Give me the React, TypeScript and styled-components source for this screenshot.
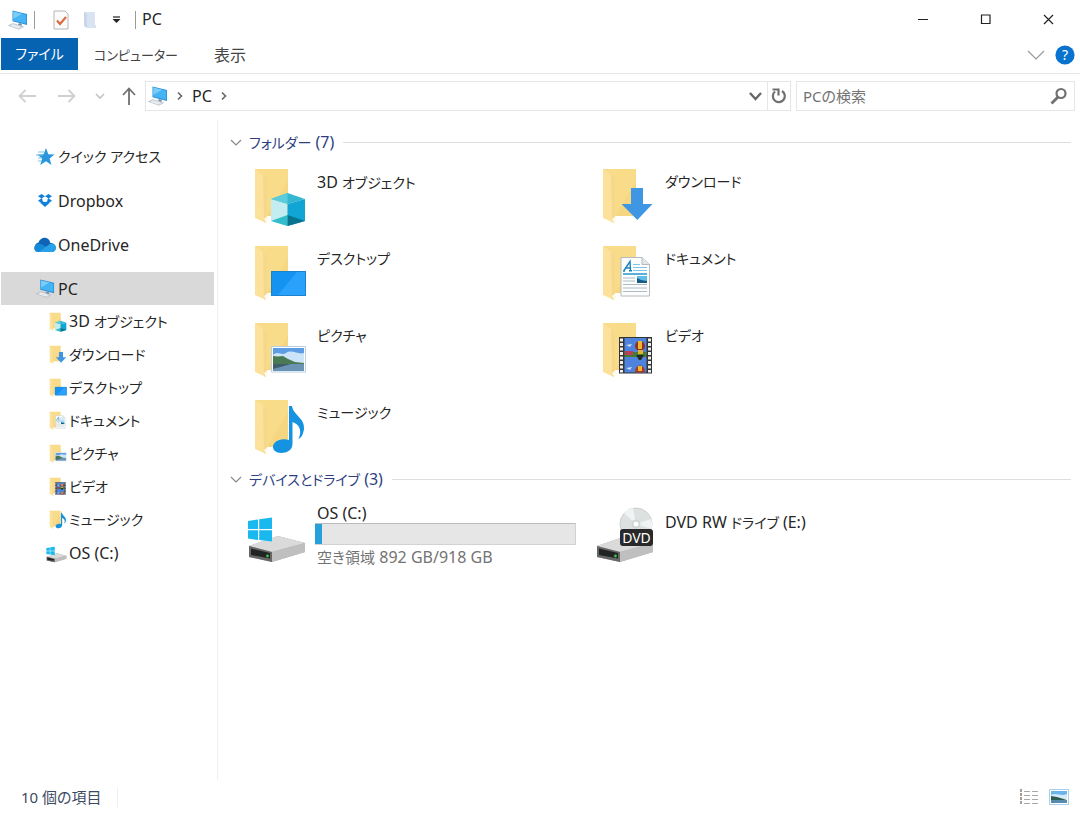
import React from "react";
import styled, { createGlobalStyle, css } from "styled-components";

const GlobalStyle = createGlobalStyle`
  * { box-sizing: border-box; }
  html, body { margin: 0; background: #ffffff; }
  body, button, input {
    font-family: "Noto Sans", "Noto Sans CJK JP", sans-serif;
    font-size: 16px;
    line-height: 24px;
    color: #262626;
    font-feature-settings: "palt";
  }
  button { border: 0; padding: 0; background: none; cursor: pointer; }
  a { color: inherit; text-decoration: none; }
  ul { list-style: none; margin: 0; padding: 0; }
  svg { display: block; flex: none; }
`;

const Window = styled.div`
  display: flex;
  flex-direction: column;
  min-height: 100vh;
`;

const TitleBar = styled.header`
  display: flex;
  align-items: center;
  height: 38px;
  padding-left: 8px;
`;

const QuickTools = styled.div`
  display: flex;
  align-items: center;
  padding-top: 2px;
`;

const ToolButton = styled.button<{ $width: number }>`
  display: flex;
  align-items: center;
  justify-content: center;
  width: ${(p) => p.$width}px;
  height: 24px;
`;

const Separator = styled.span`
  width: 1px;
  height: 18px;
  background: #9b9b9b;
`;

const Title = styled.h1`
  margin: 0 0 0 6px;
  font-size: 16px;
  font-weight: 400;
`;

const WindowControls = styled.div`
  display: flex;
  margin-left: auto;
`;

const WindowButton = styled(ToolButton)`
  height: 38px;
`;

const Ribbon = styled.nav`
  display: flex;
  align-items: center;
  height: 36px;
  padding: 0 5px 3px 1px;
  border-bottom: 1px solid #e6e6e6;
`;

const Tab = styled.button<{ $active?: boolean; $width: number; $size: number }>`
  width: ${(p) => p.$width}px;
  height: 32px;
  padding-top: 2px;
  font-size: ${(p) => p.$size}px;
  color: #444444;
  ${(p) =>
    p.$active &&
    css`
      padding-top: 0;
      color: #ffffff;
      background: #0563b1;
    `}
`;

const RibbonEnd = styled.div`
  display: flex;
  align-items: center;
  gap: 10px;
  margin-left: auto;
  padding-top: 2px;
`;

const NavBar = styled.div`
  display: flex;
  align-items: center;
  padding: 7px 5px 9px 8px;
`;

const Address = styled.div`
  display: flex;
  align-items: center;
  flex: 1;
  gap: 9px;
  height: 30px;
  padding-left: 2px;
  border: 1px solid #e6e6e6;
`;

const AddressEnd = styled.div`
  display: flex;
  align-self: stretch;
  margin-left: auto;
`;

const AddressButton = styled(ToolButton)`
  height: 28px;
  & + & { border-left: 1px solid #e6e6e6; }
`;

const Search = styled.label`
  display: flex;
  align-items: center;
  width: 279px;
  height: 30px;
  margin-left: 5px;
  padding: 0 6px;
  border: 1px solid #e6e6e6;
`;

const SearchInput = styled.input`
  flex: 1;
  min-width: 0;
  padding: 0;
  border: 0;
  outline: 0;
  font-size: 15px;
  &::placeholder { color: #737373; opacity: 1; }
`;

const Body = styled.div`
  display: flex;
  flex: 1;
`;

const Sidebar = styled.nav`
  width: 218px;
  padding: 20px 3px 0 1px;
  border-right: 1px solid #f0f0f0;
`;

const RootItem = styled.li`
  margin-bottom: 11px;
`;

const TreeLink = styled.a<{ $child?: boolean; $selected?: boolean; $latin?: boolean }>`
  display: flex;
  align-items: center;
  height: 33px;
  padding-left: ${(p) => (p.$child ? 44 : 32)}px;
  gap: ${(p) => (p.$child ? 2 : 1)}px;
  font-size: ${(p) => (p.$latin ? 16 : 14)}px;
  background: ${(p) => (p.$selected ? "#d9d9d9" : "transparent")};
`;

const TreeIcon = styled.span<{ $child?: boolean }>`
  display: flex;
  justify-content: ${(p) => (p.$child ? "flex-end" : "center")};
  width: ${(p) => (p.$child ? 22 : 24)}px;
`;

const Latin = styled.span`
  font-size: 16px;
`;

const Content = styled.main`
  flex: 1;
  padding: 10px 9px 0 12px;
`;

const Group = styled.section`
  margin-bottom: 9px;
`;

const GroupHeader = styled.h2`
  display: flex;
  align-items: center;
  gap: 7px;
  margin: 0;
  font-size: 14px;
  font-weight: 400;
  color: #2e3f7f;
  &::after {
    content: "";
    flex: 1;
    height: 1px;
    margin-left: 2px;
    background: #dedede;
  }
`;

const Items = styled.ul`
  display: grid;
  grid-template-columns: repeat(auto-fill, 348px);
  row-gap: 17px;
  padding: 12px 0 0 16px;
`;

const Item = styled.a<{ $top: number }>`
  display: flex;
  height: 60px;
  gap: 9px;
  & > div { padding-top: ${(p) => p.$top}px; }
`;

const ItemIcon = styled.span`
  display: flex;
  justify-content: flex-end;
  width: 62px;
  padding-right: 1px;
`;

const ItemName = styled.p<{ $latin?: boolean }>`
  margin: 0;
  font-size: ${(p) => (p.$latin ? 16 : 14)}px;
`;

const DriveInfo = styled.div`
  width: 259px;
  & > p { line-height: 18px; }
`;

const Usage = styled.progress`
  display: block;
  appearance: none;
  width: 261px;
  height: 22px;
  margin: 1px 0 3px -2px;
  border: 0;
  &::-webkit-progress-bar { background: #e6e6e6; border: 1px solid #d2d2d2; border-top-color: #bcbcbc; border-left: 0; }
  &::-webkit-progress-value { background: #26a0da; }
`;

const Usagefree = styled.p`
  margin: 0;
  font-size: 15px;
  color: #737373;
`;

const StatusBar = styled.footer`
  display: flex;
  align-items: center;
  height: 33px;
  padding: 0 11px 0 21px;
  font-size: 15px;
  color: #3d4a63;
`;

const StatusText = styled.span`
  padding-right: 15px;
  border-right: 1px solid #f0f0f0;
  line-height: 20px;
`;

const ViewButtons = styled.div`
  display: flex;
  gap: 10px;
  margin-left: auto;
`;

type Size = { w: number; h: number };

const PcIcon = ({ w, h }: Size) => (
  <svg width={w} height={h} viewBox="0 0 20 20">
    <path d="M4.500 .5 19 4V15L4.500 11.300Z" fill="#2d8fd5" />
    <path d="M5.300 1.600 18.200 4.700V13.800L5.300 10.500Z" fill="#45b4f5" />
    <path d="M5.300 1.600 14 3.700 5.300 9Z" fill="#7accf9" />
    <path d="M11 13 14 13.700 13.500 16 10 15Z" fill="#7b93a8" />
    <path d="M.5 15.500 5 13.500 15.500 16.800 11 19.300Z" fill="#d5dce2" stroke="#9eabb6" strokeWidth=".5" />
    <path d="M3 15.600 11 18M4.500 14.700 12.500 17.200" stroke="#fff" strokeWidth=".6" />
  </svg>
);

type Kind = "cube" | "download" | "desktop" | "document" | "picture" | "video" | "music";

const overlays: Record<Kind, React.ReactNode> = {
  cube: (
    <>
      <path d="M18 32 34.500 26 52 32 34.500 37Z" fill="#35b7cf" />
      <path d="M18 32 34.500 37V59L18 54Z" fill="#c4edf2" />
      <path d="M52 32 34.500 37V59L52 54Z" fill="#10a5d4" />
      <path d="M18 54 34.500 48V59Z" fill="#31bdc9" />
      <path d="M52 54 34.500 48V59Z" fill="#08748e" />
      <path d="M18 32 34.500 26V37Z" fill="#5accdc" />
    </>
  ),
  download: <path d="M30 21H42V37H51.500L36.300 53 20.500 37H30Z" fill="#3f97e4" />,
  desktop: (
    <>
      <path d="M18 27H53V52H18Z" fill="#1593f2" />
      <path d="M44 28H52V51H25Z" fill="#2aa1fa" />
      <path d="M18.500 27.500H52.500V51.500H18.500Z" fill="none" stroke="#1b82d0" />
    </>
  ),
  document: (
    <>
      <path d="M20 13.500H41L48.500 20.500V52H20Z" fill="#fdfdfd" stroke="#b6babd" />
      <path d="M41 13.500V20.500H48.500" fill="#e4e7e9" stroke="#b6babd" />
      <path d="M22 27 24 27M23 26.500 29 17.500 29.500 26.500M25 24H29.500M28 26.700H31" fill="none" stroke="#1c83bd" strokeWidth="1.400" />
      <path d="M32 20.500H39M32 23.500H46M32 26.500H46" stroke="#7cc6e8" />
      <path d="M22 30H46" stroke="#2494c9" strokeWidth="1.500" />
      <path d="M22 34H34M22 37H34M22 40.500H46M22 44H46M22 47.500H46" stroke="#aebcc5" />
      <path d="M36 32H46V39H36Z" fill="#62bce9" />
      <path d="M36 34 40 36 46 37V39H36Z" fill="#155d83" />
    </>
  ),
  picture: (
    <>
      <path d="M18.500 25.500H52.500V51H18.500Z" fill="#fff" stroke="#b9cfe2" />
      <path d="M20 27H51V43H20Z" fill="#5c9de3" />
      <path d="M20 34C25 29 28 35 33 32C39 28 45 34 51 32V44H20Z" fill="#cce4f9" />
      <path d="M20 35 25 35.500 30 35 35 38 42 41 51 42V44H20Z" fill="#4a7a52" />
      <path d="M20 43H51V50H20Z" fill="#6a93b5" />
      <path d="M20 43H38L20 48Z" fill="#405d6b" />
    </>
  ),
  video: (
    <>
      <path d="M18 16H51V52.500H18Z" fill="#343434" />
      <path d="M20.500 17.500V51.500M48.500 17.500V51.500" stroke="#eee" strokeWidth="3" strokeDasharray="3 1.500" />
      <path d="M23.500 17H45.500V33.500H23.500Z" fill="#4d82dd" />
      <path d="M23.500 36H45.500V51.500H23.500Z" fill="#4d82dd" />
      <path d="M23.500 31H45.500V36H23.500Z" fill="#467a36" />
      <path d="M24 30H32V34H24Z" fill="#ba3e55" />
      <path d="M25 24 31 23 29 26ZM25 47 31 46 29 49Z" fill="#c9def8" />
      <circle cx="39" cy="25" r="5" fill="#8e3427" />
      <path d="M37 20H41V28H37Z" fill="#f3b52d" />
      <path d="M37 29H42V33H37Z" fill="#e2b22e" />
      <path d="M35 34H43L40 39H38Z" fill="#222b22" />
      <path d="M34 51.500C34 42 44 42 44 51.500Z" fill="#a73a25" />
      <path d="M37 45H41V50H37Z" fill="#f3b52d" />
    </>
  ),
  music: (
    <path d="M36 8H39C40 17 52 20 51 31C50 37 48 40 45.500 41C50 31 45 26 39.500 24V46C39.500 52 34 55 28 55C23 55 19.500 52 20 48C21 43 29 40 36 42Z" fill="#1592e0" />
  ),
};

const FolderIcon = ({ kind, w, h }: Size & { kind: Kind }) => (
  <svg width={w} height={h} viewBox="0 0 54 60">
    <path d="M2 2H35V49H12Z" fill="#f9dc8a" />
    <path d="M14 49 35 14V49Z" fill="#f3d27a" opacity=".6" />
    <path d="M2 2 12 9Q14 11 14 14V53Q14 57 11 55L2 51Z" fill="#fbe19a" />
    <path d="M10 8 12 9Q14 11 14 14V53Q14 57 11 55Z" fill="#f6d88b" />
    <path d="M11 52 15 49V54L13 56Z" fill="#fffaf0" />
    {overlays[kind]}
  </svg>
);

const DriveBase = () => (
  <>
    <path d="M2 42 31 32 58 39V48L25 58 2 53Z" fill="#a6a6a6" />
    <path d="M2 42 31 32 58 39 25 48Z" fill="#dadada" />
    <path d="M25 48 58 39V48L25 58Z" fill="#bfbfbf" />
    <path d="M2 42 25 48V58L2 53Z" fill="#666" />
    <path d="M4 44.500 23 49V54.500L4 51Z" fill="#202422" />
    <circle cx="20.500" cy="52" r="1.400" fill="#47c34b" />
  </>
);

const OsDriveIcon = ({ w, h }: Size) => (
  <svg width={w} height={h} viewBox="0 0 60 60">
    <DriveBase />
    <path d="M1 17 11 15.500V25H1ZM12.200 15.300 25 13.500V25H12.200ZM1 26.200H11V36L1 34.500ZM12.200 26.200H25V37.500L12.200 36Z" fill="#19b9ef" />
  </svg>
);

const DvdDriveIcon = () => (
  <svg width="60" height="60" viewBox="0 0 60 60">
    <DriveBase />
    <circle cx="41" cy="20" r="16" fill="#dde2e1" stroke="#c9cfcf" />
    <path d="M41 20 29 9A16 16 0 0 1 38 4ZM41 20 56 15A16 16 0 0 1 57 25Z" fill="#eff3f3" />
    <circle cx="41" cy="20" r="4.500" fill="#cfd5d4" />
    <circle cx="41" cy="20" r="2.500" fill="#fff" />
    <rect x="25" y="25" width="33" height="17" rx="3" fill="#292929" />
    <text x="41.500" y="38.500" textAnchor="middle" fontSize="14" fill="#fff">DVD</text>
  </svg>
);

const StarIcon = () => (
  <svg width="22" height="20" viewBox="0 0 22 20">
    <path d="M12 1 14.300 7.200 20.500 7.500 15.600 11.400 17.500 18 12 14.300 6.200 18 8.200 11.400 3.200 7.500 9.600 7.200Z" fill="#2997dc" />
    <path d="M4 5H10M2 8H9M4 11H8M4 14H8" stroke="#7fc4ed" strokeWidth="1.200" />
  </svg>
);

const DropboxIcon = () => (
  <svg width="16" height="16" viewBox="0 0 16 16">
    <path d="M4.500 1 8 3.200 4.500 5.500 1 3.200ZM11.500 1 15 3.200 11.500 5.500 8 3.200ZM4.500 5.200 8 7.800 4.500 10.200 1 7.800ZM11.500 5.200 15 7.800 11.500 10.200 8 7.800ZM3.500 10 8 8.500 12.500 10 8 14Z" fill="#1080dd" />
    <circle cx="8" cy="6.500" r="2.600" fill="#fff" />
  </svg>
);

const CloudIcon = () => (
  <svg width="24" height="18" viewBox="0 0 24 18">
    <path d="M5 16A5 5 0 0 1 5.500 6.500C8 0 16 .5 17.500 7C24 7 24.500 16 18.500 16Z" fill="#0f64b5" />
    <path d="M5 16C2 16 .5 13 1.500 10.500C5 5 10 9 12 10L20 16Z" fill="#1688d8" />
    <path d="M6 16 17.500 7.500C25 7 24.500 16 18.500 16Z" fill="#28a1e8" />
  </svg>
);

const Chevron = ({ w, h, color, stroke }: Size & { color: string; stroke: number }) => (
  <svg width={w} height={h} viewBox={`0 0 ${w} ${h}`}>
    <path d={`M1 1 ${w / 2} ${h - 2} ${w - 1} 1`} fill="none" stroke={color} strokeWidth={stroke} />
  </svg>
);

const CrumbArrow = () => (
  <svg width="6" height="10" viewBox="0 0 6 10">
    <path d="M1 1.500 4.500 5 1 8.500" fill="none" stroke="#666" strokeWidth="1.600" />
  </svg>
);

const Arrow = ({ path, color, w, h }: Size & { path: string; color: string }) => (
  <svg width={w} height={h} viewBox={`0 0 ${w} ${h}`}>
    <path d={path} fill="none" stroke={color} strokeWidth="1.800" />
  </svg>
);

const folders: { kind: Kind; prefix?: string; name: string }[] = [
  { kind: "cube", prefix: "3D", name: "オブジェクト" },
  { kind: "download", name: "ダウンロード" },
  { kind: "desktop", name: "デスクトップ" },
  { kind: "document", name: "ドキュメント" },
  { kind: "picture", name: "ピクチャ" },
  { kind: "video", name: "ビデオ" },
  { kind: "music", name: "ミュージック" },
];

const FolderName = ({ prefix, name }: { prefix?: string; name: string }) => (
  <span>
    {prefix && <Latin>{prefix} </Latin>}
    {name}
  </span>
);

export default function App() {
  return (
    <Window>
      <GlobalStyle />
      <TitleBar>
        <QuickTools>
          <PcIcon w={20} h={20} />
          <ToolButton as="span" $width={12}><Separator /></ToolButton>
          <ToolButton $width={42} aria-label="プロパティ">
            <svg width="16" height="20" viewBox="0 0 16 20">
              <path d="M1 1H12L15 4V19H1Z" fill="#fbfbfb" stroke="#b5b5b5" />
              <path d="M4 10.500 7 14 13 7" fill="none" stroke="#df6b45" strokeWidth="2.200" />
            </svg>
          </ToolButton>
          <ToolButton $width={16} aria-label="新しいフォルダー">
            <svg width="14" height="18" viewBox="0 0 14 18">
              <path d="M1 1H12V14H13V17H4L1 15Z" fill="#dae3f2" />
              <path d="M1 1 4 3V17L1 15Z" fill="#c9d5ea" />
            </svg>
          </ToolButton>
          <ToolButton $width={37} aria-label="クイック アクセス ツール バーのカスタマイズ">
            <svg width="9" height="8" viewBox="0 0 9 8">
              <path d="M1 1H8" stroke="#222" strokeWidth="1.200" />
              <path d="M.5 3H8.500L4.500 7Z" fill="#222" />
            </svg>
          </ToolButton>
          <Separator />
        </QuickTools>
        <Title>PC</Title>
        <WindowControls>
          <WindowButton $width={63} aria-label="最小化">
            <svg width="11" height="11" viewBox="0 0 11 11"><path d="M1 5.500H11" stroke="#222" /></svg>
          </WindowButton>
          <WindowButton $width={63} aria-label="最大化">
            <svg width="11" height="11" viewBox="0 0 11 11"><path d="M1.500 1H10V9.500H1.500Z" fill="none" stroke="#222" strokeWidth="1.200" /></svg>
          </WindowButton>
          <WindowButton $width={63} aria-label="閉じる">
            <svg width="11" height="11" viewBox="0 0 11 11"><path d="M1 1 10 10M10 1 1 10" stroke="#222" strokeWidth="1.200" /></svg>
          </WindowButton>
        </WindowControls>
      </TitleBar>

      <Ribbon aria-label="リボン">
        <Tab $active $width={77} $size={14}>ファイル</Tab>
        <Tab $width={116} $size={13}>コンピューター</Tab>
        <Tab $width={72} $size={16}>表示</Tab>
        <RibbonEnd>
          <ToolButton $width={18} aria-label="リボンの展開"><Chevron w={18} h={11} color="#999" stroke={1.2} /></ToolButton>
          <ToolButton $width={20} aria-label="ヘルプ">
            <svg width="20" height="20" viewBox="0 0 20 20">
              <circle cx="10" cy="10" r="9.600" fill="#0873cf" />
              <text x="10" y="15" textAnchor="middle" fontSize="14" fill="#fff">?</text>
            </svg>
          </ToolButton>
        </RibbonEnd>
      </Ribbon>

      <NavBar>
        <ToolButton $width={38} aria-label="戻る"><Arrow w={18} h={14} color="#d0d0d0" path="M18 7H1.500M7.500 1 1.500 7 7.500 13" /></ToolButton>
        <ToolButton $width={42} aria-label="進む"><Arrow w={18} h={14} color="#d0d0d0" path="M0 7H16.500M10.500 1 16.500 7 10.500 13" /></ToolButton>
        <ToolButton $width={24} aria-label="最近表示した場所"><Chevron w={10} h={7} color="#c4c4c4" stroke={1.6} /></ToolButton>
        <ToolButton $width={33} aria-label="上へ"><Arrow w={14} h={18} color="#707070" path="M7 18V1.500M1 8 7 1.500 13 8" /></ToolButton>
        <Address>
          <PcIcon w={20} h={20} />
          <CrumbArrow />
          <button>PC</button>
          <CrumbArrow />
          <AddressEnd>
            <AddressButton $width={24} aria-label="以前の場所"><Chevron w={13} h={9} color="#666" stroke={2.4} /></AddressButton>
            <AddressButton $width={23} aria-label="最新の情報に更新">
              <svg width="16" height="16" viewBox="0 0 16 16">
                <path d="M11 3A6 6 0 1 1 4 3.500" fill="none" stroke="#707070" strokeWidth="2.200" />
                <path d="M1.500 1.500H7.500V7.500" fill="none" stroke="#707070" strokeWidth="2.200" />
              </svg>
            </AddressButton>
          </AddressEnd>
        </Address>
        <Search>
          <SearchInput type="search" placeholder="PCの検索" aria-label="PCの検索" />
          <svg width="18" height="18" viewBox="0 0 18 18">
            <circle cx="11" cy="6.500" r="4.500" fill="none" stroke="#707070" strokeWidth="2.200" />
            <path d="M8 10 1.500 16.500" stroke="#707070" strokeWidth="2.800" />
          </svg>
        </Search>
      </NavBar>

      <Body>
        <Sidebar aria-label="ナビゲーション">
          <ul>
            <RootItem><TreeLink href="#quick"><TreeIcon><StarIcon /></TreeIcon>クイック アクセス</TreeLink></RootItem>
            <RootItem><TreeLink href="#dropbox" $latin><TreeIcon><DropboxIcon /></TreeIcon>Dropbox</TreeLink></RootItem>
            <RootItem><TreeLink href="#onedrive" $latin><TreeIcon><CloudIcon /></TreeIcon>OneDrive</TreeLink></RootItem>
            <li>
              <TreeLink href="#pc" $latin $selected><TreeIcon><PcIcon w={19} h={19} /></TreeIcon>PC</TreeLink>
              <ul>
                {folders.map((f) => (
                  <li key={f.kind}>
                    <TreeLink href={`#${f.kind}`} $child>
                      <TreeIcon $child><FolderIcon kind={f.kind} w={18} h={20} /></TreeIcon>
                      <FolderName {...f} />
                    </TreeLink>
                  </li>
                ))}
                <li>
                  <TreeLink href="#c" $child $latin><TreeIcon $child><OsDriveIcon w={21} h={21} /></TreeIcon>OS (C:)</TreeLink>
                </li>
              </ul>
            </li>
          </ul>
        </Sidebar>

        <Content>
          <Group>
            <GroupHeader>
              <Chevron w={12} h={8} color="#888" stroke={1.2} />
              <span>フォルダー<Latin> (7)</Latin></span>
            </GroupHeader>
            <Items>
              {folders.map((f) => (
                <li key={f.kind}>
                  <Item href={`#${f.kind}`} $top={3}>
                    <ItemIcon><FolderIcon kind={f.kind} w={54} h={60} /></ItemIcon>
                    <div><ItemName><FolderName {...f} /></ItemName></div>
                  </Item>
                </li>
              ))}
            </Items>
          </Group>
          <Group>
            <GroupHeader>
              <Chevron w={12} h={8} color="#888" stroke={1.2} />
              <span>デバイスとドライブ<Latin> (3)</Latin></span>
            </GroupHeader>
            <Items>
              <li>
                <Item href="#c" $top={0}>
                  <ItemIcon><OsDriveIcon w={60} h={60} /></ItemIcon>
                  <DriveInfo>
                    <ItemName $latin>OS (C:)</ItemName>
                    <Usage value={26} max={918} aria-label="OS (C:) の使用領域" />
                    <Usagefree>空き領域<Latin> 892 GB/918 GB</Latin></Usagefree>
                  </DriveInfo>
                </Item>
              </li>
              <li>
                <Item href="#e" $top={6}>
                  <ItemIcon><DvdDriveIcon /></ItemIcon>
                  <div><ItemName><Latin>DVD RW </Latin>ドライブ<Latin> (E:)</Latin></ItemName></div>
                </Item>
              </li>
            </Items>
          </Group>
        </Content>
      </Body>

      <StatusBar>
        <StatusText>10 個の項目</StatusText>
        <ViewButtons>
          <ToolButton $width={20} aria-label="詳細">
            <svg width="20" height="18" viewBox="0 0 20 18">
              <path d="M2 1V17" stroke="#a59a94" strokeWidth="2" strokeDasharray="3 1" />
              <path d="M5 3.500H11M13 3.500H19M5 7.500H11M13 7.500H19M5 11.500H11M13 11.500H19M5 15.500H11M13 15.500H19" stroke="#a8a8a8" />
            </svg>
          </ToolButton>
          <ToolButton $width={20} aria-label="大アイコン">
            <svg width="20" height="16" viewBox="0 0 20 16">
              <path d="M.5 .5H19.500V15.500H.5Z" fill="#fff" stroke="#a9cfec" />
              <path d="M2 2H18V9H2Z" fill="#6cb5ec" />
              <path d="M2 6C7 3 12 8 18 5V10H2Z" fill="#d5eafa" />
              <path d="M2 7 8 8 18 11V12H2Z" fill="#2d5d52" />
              <path d="M2 11H18V14H2Z" fill="#588cae" />
            </svg>
          </ToolButton>
        </ViewButtons>
      </StatusBar>
    </Window>
  );
}
